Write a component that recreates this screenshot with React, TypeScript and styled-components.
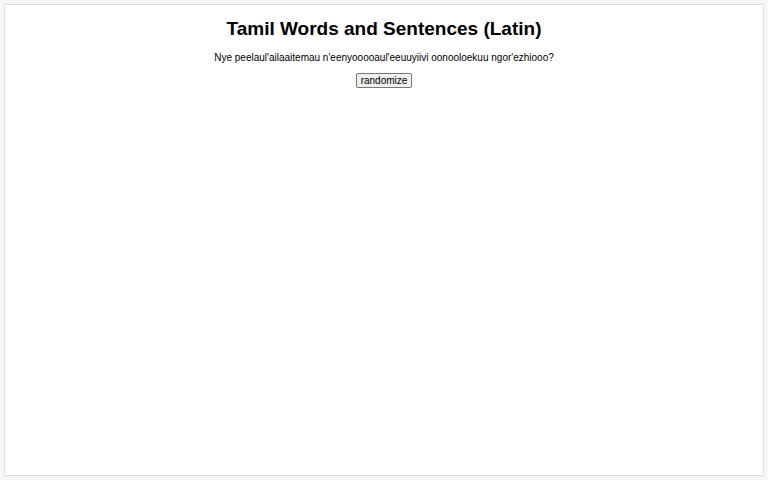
import { useState } from 'react';
import styled, { createGlobalStyle } from 'styled-components';

const sentences = [
  "Nye peelaul'ailaaitemau n'eenyooooaul'eeuuyiivi oonooloekuu ngor'ezhiooo?",
  "Ngor'ezhi oonooloe n'eenyoo peelau?",
  "Aitemau yiivi kuu nye l'eeuu."
];

const GlobalStyle = createGlobalStyle`
  * {
    box-sizing: border-box;
  }

  body {
    margin: 0;
    background: #F6F6F6;
    font-family: "Liberation Sans", Arial, sans-serif;
    font-size: 10px;
    color: #000;
  }
`;

const Page = styled.main`
  min-height: calc(100vh - 8px);
  margin: 4px;
  padding: 12px;
  display: flex;
  flex-direction: column;
  align-items: center;
  background: #FFF;
  border: 1px solid #DDD;
  text-align: center;
`;

const Title = styled.h1`
  margin: 0 0 12px;
  font-size: 19px;
  line-height: 23px;
`;

const Sentence = styled.p`
  margin: 0 0 9px;
  line-height: 12px;
`;

const Button = styled.button`
  height: 15px;
  padding: 0 4px;
  background: #EFEFEF;
  border: 1px solid #767676;
  border-radius: 2px;
  font-family: inherit;
  font-size: 10px;
  line-height: 12px;
  color: #000;
`;

const App = () => {
  const [index, setIndex] = useState(0);

  const randomize = () => {
    setIndex(Math.floor(Math.random() * sentences.length));
  };

  return (
    <>
      <GlobalStyle />
      <Page>
        <Title>Tamil Words and Sentences (Latin)</Title>
        <Sentence>{sentences[index]}</Sentence>
        <Button type="button" onClick={randomize}>randomize</Button>
      </Page>
    </>
  );
};

export default App;
